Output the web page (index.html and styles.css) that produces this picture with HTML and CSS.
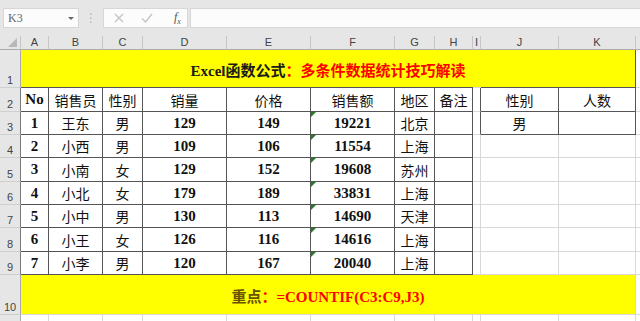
FILE: index.html
```html
<!DOCTYPE html>
<html lang="zh">
<head>
<meta charset="utf-8">
<title>Excel</title>
<link rel="stylesheet" href="styles.css">
</head>
<body>
<div class="toolbar">
  <div class="namebox"><span class="ref">K3</span><span class="caret"></span></div>
  <div class="sep">⋮</div>
  <div class="btns">
    <svg class="ico" width="12" height="12" viewBox="0 0 12 12"><path d="M2 2 L10 10 M10 2 L2 10" stroke="#c4c4c4" stroke-width="1.3" fill="none"/></svg>
    <svg class="ico" width="14" height="12" viewBox="0 0 14 12"><path d="M2 6.5 L5.5 10 L12 2" stroke="#c4c4c4" stroke-width="1.4" fill="none"/></svg>
    <span class="fx"><i>f</i><sub>x</sub></span>
  </div>
  <div class="formula"></div>
</div>

<div class="sheet">
  <div class="corner"><svg width="9" height="9" viewBox="0 0 9 9"><path d="M9 0 L9 9 L0 9 Z" fill="#b8b8b8"/></svg></div>
  <div class="ch">A</div><div class="ch">B</div><div class="ch">C</div><div class="ch">D</div><div class="ch">E</div><div class="ch">F</div><div class="ch">G</div><div class="ch">H</div><div class="ch">I</div><div class="ch">J</div><div class="ch">K</div><div class="ch"></div>

  <div class="rh">1</div>
  <div class="title merged"><b class="dk">Excel函数公式</b><b class="rd">：多条件数据统计技巧解读</b></div>
  <div class="c"></div>

  <div class="rh tb">2</div>
  <div class="c t num">No</div><div class="c t zh">销售员</div><div class="c t zh">性别</div><div class="c t zh">销量</div><div class="c t zh">价格</div><div class="c t zh">销售额</div><div class="c t zh">地区</div><div class="c t zh">备注</div><div class="c tl"></div><div class="c t zh">性别</div><div class="c t zh">人数</div><div class="c"></div>

  <div class="rh tb">3</div>
  <div class="c t num">1</div><div class="c t zh">王东</div><div class="c t zh">男</div><div class="c t num">129</div><div class="c t num">149</div><div class="c t num flag">19221</div><div class="c t zh">北京</div><div class="c t"></div><div class="c tl"></div><div class="c t zh">男</div><div class="c t"></div><div class="c"></div>

  <div class="rh tb">4</div>
  <div class="c t num">2</div><div class="c t zh">小西</div><div class="c t zh">男</div><div class="c t num">109</div><div class="c t num">106</div><div class="c t num flag">11554</div><div class="c t zh">上海</div><div class="c t"></div><div class="c"></div><div class="c"></div><div class="c"></div><div class="c"></div>

  <div class="rh tb">5</div>
  <div class="c t num">3</div><div class="c t zh">小南</div><div class="c t zh">女</div><div class="c t num">129</div><div class="c t num">152</div><div class="c t num flag">19608</div><div class="c t zh">苏州</div><div class="c t"></div><div class="c"></div><div class="c"></div><div class="c"></div><div class="c"></div>

  <div class="rh tb">6</div>
  <div class="c t num">4</div><div class="c t zh">小北</div><div class="c t zh">女</div><div class="c t num">179</div><div class="c t num">189</div><div class="c t num flag">33831</div><div class="c t zh">上海</div><div class="c t"></div><div class="c"></div><div class="c"></div><div class="c"></div><div class="c"></div>

  <div class="rh tb">7</div>
  <div class="c t num">5</div><div class="c t zh">小中</div><div class="c t zh">男</div><div class="c t num">130</div><div class="c t num">113</div><div class="c t num flag">14690</div><div class="c t zh">天津</div><div class="c t"></div><div class="c"></div><div class="c"></div><div class="c"></div><div class="c"></div>

  <div class="rh tb">8</div>
  <div class="c t num">6</div><div class="c t zh">小王</div><div class="c t zh">女</div><div class="c t num">126</div><div class="c t num">116</div><div class="c t num flag">14616</div><div class="c t zh">上海</div><div class="c t"></div><div class="c"></div><div class="c"></div><div class="c"></div><div class="c"></div>

  <div class="rh tb">9</div>
  <div class="c t num">7</div><div class="c t zh">小李</div><div class="c t zh">男</div><div class="c t num">120</div><div class="c t num">167</div><div class="c t num flag">20040</div><div class="c t zh">上海</div><div class="c t"></div><div class="c"></div><div class="c"></div><div class="c"></div><div class="c"></div>

  <div class="rh">10</div>
  <div class="note merged"><b class="ol">重点</b><b class="rd">：=COUNTIF(C3:C9,J3)</b></div>
  <div class="c"></div>

  <div class="rh">11</div>
  <div class="c"></div><div class="c"></div><div class="c"></div><div class="c"></div><div class="c"></div><div class="c"></div><div class="c"></div><div class="c"></div><div class="c"></div><div class="c"></div><div class="c"></div><div class="c"></div>
</div>
</body>
</html>
```

FILE: styles.css
```css
html, body {
  margin: 0;
  padding: 0;
  background: #ffffff;
  overflow: hidden;
}
body {
  width: 640px;
  height: 321px;
  font-family: "Liberation Serif", "Noto Sans CJK SC", serif;
}

/* ---------- toolbar ---------- */
.toolbar {
  height: 36px;
  background: #e6e6e6;
  display: flex;
  align-items: flex-start;
  padding-top: 8px;
  box-sizing: border-box;
}
.namebox {
  margin-left: 3px;
  width: 76px;
  height: 20px;
  box-sizing: border-box;
  background: #fcfcfc;
  border: 1px solid #d6d6d6;
  display: flex;
  align-items: center;
  justify-content: space-between;
  padding: 0 4px 0 4px;
}
.ref {
  font-family: "Liberation Serif", serif;
  font-size: 12px;
  color: #666;
}
.caret {
  width: 0;
  height: 0;
  border-left: 3px solid transparent;
  border-right: 3px solid transparent;
  border-top: 3px solid #666;
}
.sep {
  width: 24px;
  text-align: center;
  color: #b0b0b0;
  font-family: "DejaVu Sans", sans-serif;
  font-size: 12px;
  line-height: 20px;
}
.btns {
  width: 85px;
  height: 20px;
  box-sizing: border-box;
  background: #fcfcfc;
  border: 1px solid #d6d6d6;
  display: flex;
  align-items: center;
  padding-left: 9px;
  gap: 15px;
}
.fx {
  font-family: "Liberation Serif", serif;
  font-size: 12px;
  color: #555;
  margin-left: 5px;
}
.fx sub {
  font-size: 8px;
  font-style: italic;
}
.formula {
  margin-left: 2px;
  flex: 1;
  height: 20px;
  box-sizing: border-box;
  background: #fcfcfc;
  border: 1px solid #d6d6d6;
  border-right: none;
}

/* ---------- sheet grid ---------- */
.sheet {
  display: grid;
  grid-template-columns: 21px 28px 54px 40px 84px 84px 84px 40px 38px 8px 78px 77px 30px;
  grid-template-rows: 14px 38px 24px 23px 23px 24px 23px 23px 24px 23px 40px 20px;
}
.sheet > div {
  box-sizing: border-box;
  border-right: 1px solid #d9d9d9;
  border-bottom: 1px solid #d9d9d9;
  min-width: 0;
  overflow: hidden;
}
.corner {
  background: #e6e6e6;
  display: flex;
  align-items: flex-end;
  justify-content: flex-end;
  padding: 0 3px 2px 0;
}
.sheet > .corner, .sheet > .ch {
  border-bottom-color: #ababab;
  border-right-color: #c6c6c6;
}
.ch {
  background: #e6e6e6;
  font-family: "Liberation Sans", "DejaVu Sans", sans-serif;
  font-size: 11px;
  color: #444;
  display: flex;
  align-items: center;
  justify-content: center;
  line-height: 1;
}
.sheet > .rh {
  background: #e6e6e6;
  border-right-color: #ababab;
  border-bottom-color: #cfcfcf;
  font-family: "Liberation Sans", "DejaVu Sans", sans-serif;
  font-size: 11px;
  color: #444;
  display: flex;
  align-items: flex-end;
  justify-content: center;
  line-height: 1;
  padding-bottom: 1px;
}
.sheet > .rh.tb {
  border-right-color: #7a7a7a;
}

.c {
  display: flex;
  align-items: center;
  justify-content: center;
  color: #111;
  white-space: nowrap;
  position: relative;
}
.sheet > .t {
  border-right-color: #555;
  border-bottom-color: #555;
}
.sheet > .tl {
  border-right-color: #555;
}
.num {
  font-family: "Liberation Serif", serif;
  font-weight: bold;
  font-size: 15px;
}
.zh {
  font-family: "Noto Sans CJK SC", sans-serif;
  font-size: 14px;
}
.flag::before {
  content: "";
  position: absolute;
  left: 0;
  top: 0;
  width: 5px;
  height: 5px;
  background: #2a7a2a;
  clip-path: polygon(0 0, 100% 0, 0 100%);
}

/* ---------- merged yellow rows ---------- */
.merged {
  grid-column: span 11;
  background: #ffff00;
  display: flex;
  align-items: center;
  justify-content: center;
  white-space: nowrap;
  font-size: 15px;
}
.sheet > .title {
  border-bottom: 1px solid;
  border-right: 1px solid;
  border-image: linear-gradient(to right, #555 0, #555 452px, #d9d9d9 452px, #d9d9d9 460px, #555 460px, #555 100%) 1;
  padding-top: 2px;
}
.merged b {
  font-family: "Liberation Serif", "Noto Sans CJK SC", serif;
  font-weight: bold;
}
.dk { color: #1a1a1a; }
.rd { color: #ff0000; }
.ol { color: #6b5200; }
.note {
  padding-top: 2px;
}
```
